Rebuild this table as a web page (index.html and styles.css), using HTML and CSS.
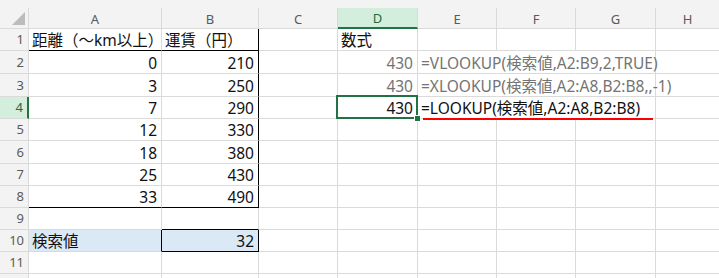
FILE: index.html
```html
<!DOCTYPE html>
<html lang="ja">
<head>
  <meta charset="UTF-8">
  <title>LOOKUP 関数</title>
  <link rel="stylesheet" href="styles.css">
</head>
<body>
  <div class="topbar"></div>
  <div class="sheet">
    <!-- column headers -->
    <div class="corner"><span class="corner-tri"></span></div>
    <div class="colhead">A</div>
    <div class="colhead">B</div>
    <div class="colhead">C</div>
    <div class="colhead active">D</div>
    <div class="colhead">E</div>
    <div class="colhead">F</div>
    <div class="colhead">G</div>
    <div class="colhead">H</div>

    <!-- row 1 -->
    <div class="rowhead">1</div>
    <div class="cell t-head">距離（～km以上）</div>
    <div class="cell t-head t-right">運賃（円）</div>
    <div class="cell"></div>
    <div class="cell">数式</div>
    <div class="cell"></div><div class="cell"></div><div class="cell"></div><div class="cell"></div>

    <!-- row 2 -->
    <div class="rowhead">2</div>
    <div class="cell num">0</div>
    <div class="cell num t-right">210</div>
    <div class="cell"></div>
    <div class="cell num muted">430</div>
    <div class="cell spill muted">=VLOOKUP(検索値,A2:B9,2,TRUE)</div>
    <div class="cell pass"></div><div class="cell"></div><div class="cell"></div>

    <!-- row 3 -->
    <div class="rowhead">3</div>
    <div class="cell num">3</div>
    <div class="cell num t-right">250</div>
    <div class="cell"></div>
    <div class="cell num muted">430</div>
    <div class="cell spill muted">=XLOOKUP(検索値,A2:A8,B2:B8,,-1)</div>
    <div class="cell pass"></div><div class="cell"></div><div class="cell"></div>

    <!-- row 4 -->
    <div class="rowhead active">4</div>
    <div class="cell num">7</div>
    <div class="cell num t-right">290</div>
    <div class="cell"></div>
    <div class="cell num selected">430<span class="sel-box"></span><span class="sel-handle"></span></div>
    <div class="cell spill">=LOOKUP(検索値,A2:A8,B2:B8)<span class="mark"></span></div>
    <div class="cell pass"></div><div class="cell"></div><div class="cell"></div>

    <!-- row 5 -->
    <div class="rowhead">5</div>
    <div class="cell num">12</div>
    <div class="cell num t-right">330</div>
    <div class="cell"></div><div class="cell"></div><div class="cell"></div><div class="cell"></div><div class="cell"></div><div class="cell"></div>

    <!-- row 6 -->
    <div class="rowhead">6</div>
    <div class="cell num">18</div>
    <div class="cell num t-right">380</div>
    <div class="cell"></div><div class="cell"></div><div class="cell"></div><div class="cell"></div><div class="cell"></div><div class="cell"></div>

    <!-- row 7 -->
    <div class="rowhead">7</div>
    <div class="cell num">25</div>
    <div class="cell num t-right">430</div>
    <div class="cell"></div><div class="cell"></div><div class="cell"></div><div class="cell"></div><div class="cell"></div><div class="cell"></div>

    <!-- row 8 -->
    <div class="rowhead">8</div>
    <div class="cell num t-bottom">33</div>
    <div class="cell num t-bottom t-right">490</div>
    <div class="cell"></div><div class="cell"></div><div class="cell"></div><div class="cell"></div><div class="cell"></div><div class="cell"></div>

    <!-- row 9 -->
    <div class="rowhead">9</div>
    <div class="cell"></div>
    <div class="cell above-box"></div>
    <div class="cell"></div><div class="cell"></div><div class="cell"></div><div class="cell"></div><div class="cell"></div><div class="cell"></div>

    <!-- row 10 -->
    <div class="rowhead">10</div>
    <div class="cell input-label">検索値</div>
    <div class="cell num input-box">32</div>
    <div class="cell"></div><div class="cell"></div><div class="cell"></div><div class="cell"></div><div class="cell"></div><div class="cell"></div>

    <!-- row 11 -->
    <div class="rowhead">11</div>
    <div class="cell"></div><div class="cell"></div><div class="cell"></div><div class="cell"></div><div class="cell"></div><div class="cell"></div><div class="cell"></div><div class="cell"></div>

    <!-- row 12 -->
    <div class="rowhead"></div>
    <div class="cell"></div><div class="cell"></div><div class="cell"></div><div class="cell"></div><div class="cell"></div><div class="cell"></div><div class="cell"></div><div class="cell"></div>
  </div>
</body>
</html>
```

FILE: styles.css
```css
/* Base */
body {
  margin: 0;
  background: #fff;
  font-family: "Noto Sans", "Noto Sans CJK JP", sans-serif;
  overflow: hidden;
}

.topbar {
  height: 8px;
  background: #f3f3f3;
}

/* Sheet grid */
.sheet {
  display: grid;
  grid-template-columns: 29px 133px 97px 79px 80px 79px 79px 80px 64px;
  grid-template-rows: 21px 22px 23px 23px 22px 22px 23px 22px 22px 22px 22px 22px 10px;
}

.sheet > div {
  box-sizing: border-box;
  border-right: 1px solid #dadada;
  border-bottom: 1px solid #dadada;
}

/* Headers */
.corner, .colhead, .rowhead {
  background: #f3f3f3;
  color: #5a5a5a;
  font-size: 13px;
}

.corner {
  position: relative;
}

.corner-tri {
  position: absolute;
  right: 3px;
  bottom: 3px;
  width: 0;
  height: 0;
  border-left: 13px solid transparent;
  border-bottom: 13px solid #bcbcbc;
}

.colhead {
  display: flex;
  align-items: center;
  justify-content: center;
  line-height: 16px;
  padding-top: 1px;
}

.colhead.active {
  background: #d3eedd;
  color: #1d6b3f;
  border-bottom: 2px solid #217346;
}

.rowhead {
  display: flex;
  align-items: flex-end;
  justify-content: flex-end;
  padding: 0 4px 3px 0;
  line-height: 16px;
}

.rowhead.active {
  background: #d3eedd;
  color: #1d6b3f;
  border-right: 2px solid #217346;
}

/* Cells */
.cell {
  display: flex;
  align-items: flex-end;
  padding: 0 3px 1px;
  font-size: 15.5px;
  line-height: 18px;
  color: #111;
  white-space: nowrap;
}

.num {
  justify-content: flex-end;
  padding-right: 4px;
}

.muted {
  color: #747474;
}

/* text running over into the next columns hides the gridline */
.sheet > .spill {
  border-right-color: transparent;
  position: relative;
  z-index: 2;
}

.sheet > .pass {
  border-right-color: transparent;
}

/* Fare table borders */
.sheet > .t-head {
  border-bottom-color: #000;
}

.sheet > .t-bottom {
  border-bottom-color: #000;
}

.sheet > .t-right {
  border-right-color: #000;
}

/* Lookup value input */
.sheet > .above-box {
  border-bottom-color: #000;
}

.input-label {
  background: #dbe8f6;
}

.sheet > .input-label {
  border-right-color: #000;
}

.sheet > .input-box {
  background: #dbe8f6;
  border-right-color: #000;
  border-bottom-color: #000;
}

/* Active cell */
.selected {
  position: relative;
  z-index: 3;
}

.sel-box {
  position: absolute;
  left: -2px;
  top: -2px;
  right: -1px;
  bottom: -1px;
  border: 2px solid #217346;
}

.sel-handle {
  position: absolute;
  right: -4px;
  bottom: -4px;
  width: 5px;
  height: 5px;
  background: #217346;
  border: 1px solid #fff;
}

.mark {
  position: absolute;
  left: 5px;
  top: 21px;
  width: 230px;
  height: 2px;
  background: #f00;
}
```
